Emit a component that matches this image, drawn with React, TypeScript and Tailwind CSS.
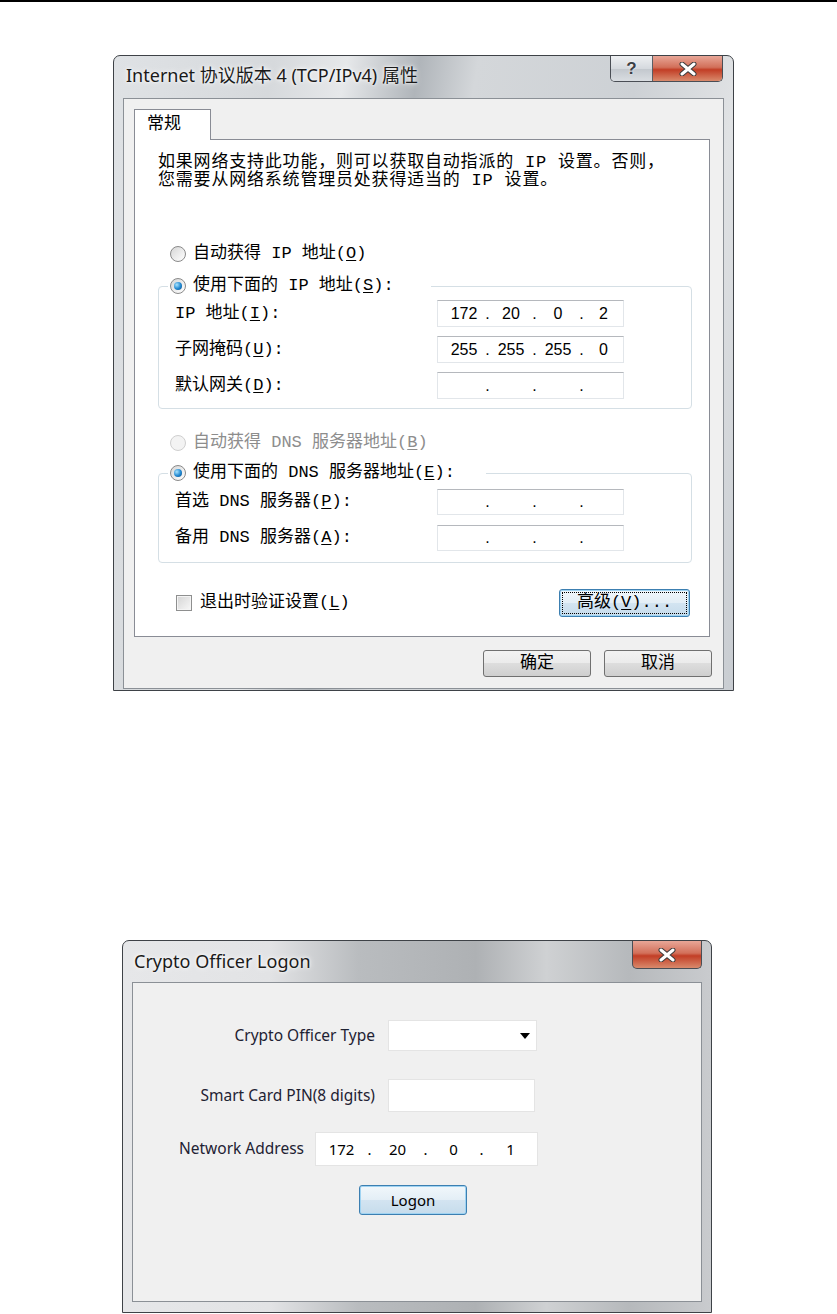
import React from "react";

const simsun = "font-['Liberation_Mono','Noto_Sans_CJK_SC',monospace]";
const segoe = "font-['Noto_Sans',sans-serif]";

function Radio({ on, disabled }: { on?: boolean; disabled?: boolean }) {
  if (disabled)
    return <span className="flex h-[16px] w-[16px] shrink-0 rounded-full border border-[#cfcfcf] bg-[#f3f3f3]" />;
  return (
    <span className="flex h-[16px] w-[16px] shrink-0 items-center justify-center rounded-full border border-[#8a8a8a] bg-[linear-gradient(135deg,#d6d6d6,#ffffff)]">
      {on && (
        <span className="h-[8px] w-[8px] rounded-full bg-[radial-gradient(circle_at_35%_35%,#a8e4ff,#1f86cf_55%,#0c4a82)]" />
      )}
    </span>
  );
}

function IpBox({ parts, h }: { parts: string[]; h: string }) {
  return (
    <div className={`flex w-[187px] items-center border border-[#e2e6ea] border-t-[#b5b8bd] bg-white pl-[5px] text-[16px] font-['Liberation_Sans',sans-serif] text-black ${h}`}>
      <span className="w-[42px] text-center">{parts[0]}</span>
      <span className="w-[5px] text-center">.</span>
      <span className="w-[42px] text-center">{parts[1]}</span>
      <span className="w-[5px] text-center">.</span>
      <span className="w-[42px] text-center">{parts[2]}</span>
      <span className="w-[5px] text-center">.</span>
      <span className="flex-1 text-center">{parts[3]}</span>
    </div>
  );
}

function Key({ k }: { k: string }) {
  return (
    <>
      (<span className="underline underline-offset-2">{k}</span>)
    </>
  );
}

function CloseX() {
  return (
    <svg width="18" height="14" viewBox="0 0 18 14">
      <path d="M3 2 L15 12 M15 2 L3 12" stroke="#3a3a3a" strokeWidth="5" strokeLinecap="round" />
      <path d="M3 2 L15 12 M15 2 L3 12" stroke="#ffffff" strokeWidth="3" strokeLinecap="round" />
    </svg>
  );
}

function WinButton({ children, w }: { children: React.ReactNode; w: string }) {
  return (
    <div
      className={`flex h-[27px] items-center justify-center rounded-[3px] border border-[#707070] bg-[linear-gradient(#f2f2f2_0%,#ebebeb_50%,#dddddd_50%,#cfcfcf_100%)] text-[17px] text-black ${w}`}
    >
      {children}
    </div>
  );
}

function TcpDialog() {
  return (
    <div className="flex h-[636px] w-[621px] flex-col rounded-t-[7px] border border-[#3e4247] bg-[linear-gradient(100deg,#dfe2e5_0%,#d6d9dc_22%,#e6e8ea_32%,#b0b5ba_42%,#d4d7da_50%,#cdd1d5_72%,#e0e2e4_86%,#c8ccd1_100%)]">
      <div className="flex h-[42px] shrink-0 items-start">
        <span className="ml-[12px] mt-[6px] text-[18px] text-[#1a1a1a] font-['Noto_Sans','Noto_Sans_CJK_SC',sans-serif] [text-shadow:0_0_6px_#fff,0_0_3px_#fff]">
          Internet 协议版本 4 (TCP/IPv4) 属性
        </span>
        <div className="ml-auto mr-[10px] flex h-[26px] overflow-hidden rounded-b-[5px] border border-t-0 border-[#4a4e55]">
          <div className="flex w-[42px] items-center justify-center border-r border-[#5a5e64] bg-[linear-gradient(#eef0f2,#d5d9de_50%,#c2c7cd_51%,#d9dde1)] text-[17px] font-bold text-[#3b3f44] font-['Liberation_Sans',sans-serif] [text-shadow:0_0_2px_#fff]">
            ?
          </div>
          <div className="flex w-[69px] items-center justify-center bg-[linear-gradient(#e8a697,#d2705a_45%,#c23e26_55%,#d98a6c)]">
            <CloseX />
          </div>
        </div>
      </div>
      <div className={`mx-[9px] flex flex-1 flex-col border border-[#8b9096] bg-[#f0f0f0] pl-[10px] pt-[10px] ${simsun}`}>
        <div className="relative z-10 flex h-[31px] w-[77px] items-center border border-b-0 border-[#898c95] bg-white pl-[12px] text-[17px] text-black">
          常规
        </div>
        <div className="-mt-px flex h-[498px] w-[576px] flex-col border border-[#898c95] bg-white pl-[23px] pr-[17px] text-[17px] text-black">
          <p className="mt-[14px] leading-[18px] tracking-[0.8px]">
            如果网络支持此功能，则可以获取自动指派的 IP 设置。否则，
            <br />
            您需要从网络系统管理员处获得适当的 IP 设置。
          </p>
          <div className="mt-[52px] flex h-[24px] items-center gap-[7px] pl-[12px]">
            <Radio />
            <span>
              自动获得 IP 地址<Key k="O" />
            </span>
          </div>
          <fieldset className="mt-[8px] rounded-[4px] border border-[#d5dfe5] pb-[9px]">
            <legend className="ml-[9px] flex h-[24px] w-[263px] items-center gap-[7px] px-[2px]">
              <Radio on />
              <span>
                使用下面的 IP 地址<Key k="S" />:
              </span>
            </legend>
            <div className="flex flex-col gap-[9px] pt-[2px]">
              <div className="flex h-[27px] items-center">
                <span className="w-[278px] pl-[16px]">
                  IP 地址<Key k="I" />:
                </span>
                <IpBox parts={["172", "20", "0", "2"]} h="h-[27px]" />
              </div>
              <div className="flex h-[27px] items-center">
                <span className="w-[278px] pl-[16px]">
                  子网掩码<Key k="U" />:
                </span>
                <IpBox parts={["255", "255", "255", "0"]} h="h-[27px]" />
              </div>
              <div className="flex h-[27px] items-center">
                <span className="w-[278px] pl-[16px]">
                  默认网关<Key k="D" />:
                </span>
                <IpBox parts={["", "", "", ""]} h="h-[27px]" />
              </div>
            </div>
          </fieldset>
          <div className="mt-[22px] flex h-[24px] items-center gap-[7px] pl-[12px] text-[#8d8d8d]">
            <Radio disabled />
            <span>
              自动获得 DNS 服务器地址<Key k="B" />
            </span>
          </div>
          <fieldset className="mt-[6px] rounded-[4px] border border-[#d5dfe5] pb-[11px]">
            <legend className="ml-[9px] flex h-[24px] w-[318px] items-center gap-[7px] px-[2px]">
              <Radio on />
              <span>
                使用下面的 DNS 服务器地址<Key k="E" />:
              </span>
            </legend>
            <div className="flex flex-col gap-[10px] pt-[4px]">
              <div className="flex h-[26px] items-center">
                <span className="w-[278px] pl-[16px]">
                  首选 DNS 服务器<Key k="P" />:
                </span>
                <IpBox parts={["", "", "", ""]} h="h-[26px]" />
              </div>
              <div className="flex h-[26px] items-center">
                <span className="w-[278px] pl-[16px]">
                  备用 DNS 服务器<Key k="A" />:
                </span>
                <IpBox parts={["", "", "", ""]} h="h-[26px]" />
              </div>
            </div>
          </fieldset>
          <div className="mt-[26px] flex h-[28px] items-center pl-[18px] pr-[2px]">
            <span className="h-[16px] w-[16px] border border-[#8e8f8f] bg-[linear-gradient(135deg,#d4d4d4,#f8f8f8)] shadow-[inset_0_0_0_1px_#f4f4f4]" />
            <span className="ml-[8px]">
              退出时验证设置<Key k="L" />
            </span>
            <div className="ml-auto flex h-[28px] w-[131px] rounded-[3px] border border-[#3c7fb1] bg-[linear-gradient(#f1f7fb_0%,#e3eef6_50%,#d3e4f1_50%,#c6dcec_100%)] p-[2px] shadow-[inset_0_0_0_1px_#9fd3f2]">
              <span className="flex flex-1 items-center justify-center border border-dotted border-black text-[17px]">
                高级<Key k="V" />...
              </span>
            </div>
          </div>
        </div>
        <div className="mt-[13px] flex justify-end gap-[13px] pr-[11px]">
          <WinButton w="w-[108px]">确定</WinButton>
          <WinButton w="w-[108px]">取消</WinButton>
        </div>
      </div>
      <div className="h-px" />
    </div>
  );
}

function LogonDialog() {
  return (
    <div className="flex h-[373px] w-[590px] flex-col rounded-t-[7px] border border-[#3e4247] bg-[linear-gradient(90deg,#e6e7e9_0%,#e2e3e5_25%,#b9bcbf_40%,#aeb1b4_60%,#cfd1d3_72%,#b6b9bc_86%,#c9cbce_100%)]">
      <div className="flex h-[41px] shrink-0 items-start">
        <span className={`ml-[11px] mt-[7px] text-[18px] text-[#1a1a1a] [text-shadow:0_0_6px_#fff,0_0_3px_#fff] ${segoe}`}>
          Crypto Officer Logon
        </span>
        <div className="ml-auto mr-[9px] flex h-[28px] w-[70px] items-center justify-center rounded-b-[5px] border border-t-0 border-[#4a4e55] bg-[linear-gradient(#e8a697,#d2705a_45%,#c23e26_55%,#d98a6c)]">
          <CloseX />
        </div>
      </div>
      <div className={`mx-[9px] flex flex-1 flex-col border border-[#8b9096] bg-[#f0f0f0] pt-[37px] text-[15.5px] text-[#1e2233] ${segoe}`}>
        <div className="flex h-[31px] items-center">
          <span className="w-[242px] text-right">Crypto Officer Type</span>
          <div className="ml-[13px] flex h-[31px] w-[149px] items-center justify-end border border-[#e4e4e4] bg-white pr-[6px]">
            <svg width="10" height="6" viewBox="0 0 10 6">
              <path d="M0 0 H10 L5 6 Z" fill="#000" />
            </svg>
          </div>
        </div>
        <div className="mt-[28px] flex h-[33px] items-center">
          <span className="w-[242px] text-right">Smart Card PIN(8 digits)</span>
          <div className="ml-[13px] h-[33px] w-[147px] border border-[#e4e4e4] bg-white" />
        </div>
        <div className="mt-[20px] flex h-[34px] items-center">
          <span className="w-[171px] text-right">Network Address</span>
          <div className="ml-[11px] flex h-[34px] w-[223px] items-center border border-[#e4e4e4] bg-white text-[15px] text-black">
            <span className="w-[51px] text-center">172</span>
            <span className="w-[5px] text-center">.</span>
            <span className="w-[51px] text-center">20</span>
            <span className="w-[5px] text-center">.</span>
            <span className="w-[51px] text-center">0</span>
            <span className="w-[5px] text-center">.</span>
            <span className="flex-1 text-center">1</span>
          </div>
        </div>
        <div className="ml-[226px] mt-[19px] flex h-[30px] w-[108px] items-center justify-center rounded-[3px] border border-[#3c7fb1] bg-[linear-gradient(#f1f7fb_0%,#e3eef6_50%,#d3e4f1_50%,#c6dcec_100%)] text-[15px] text-black shadow-[inset_0_0_0_1px_#9fd3f2]">
          Logon
        </div>
      </div>
      <div className="h-[10px]" />
    </div>
  );
}

export default function App() {
  return (
    <div className="min-h-[1314px] w-[837px] overflow-hidden bg-white">
      <div className="h-[2px] bg-black" />
      <div className="ml-[113px] mt-[53px]">
        <TcpDialog />
      </div>
      <div className="ml-[122px] mt-[249px]">
        <LogonDialog />
      </div>
    </div>
  );
}
